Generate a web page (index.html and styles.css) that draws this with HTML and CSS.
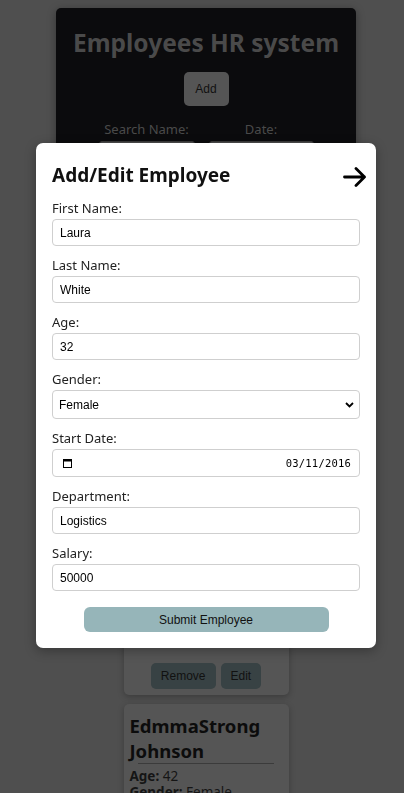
FILE: index.html
```html
<!DOCTYPE html>
<html lang="en">
<head>
<meta charset="utf-8">
<title>Employees HR system</title>
<link rel="stylesheet" href="styles.css">
</head>
<body>
<div class="page">
  <section class="header-card">
    <h1 class="app-title">Employees HR system</h1>
    <button class="btn-add" type="button">Add</button>
    <div class="search-row">
      <div class="search-col">
        <label class="search-label">Search Name:</label>
        <input class="search-input search-name" type="text">
      </div>
      <div class="search-col">
        <label class="search-label">Date:</label>
        <input class="search-input search-date" type="text">
      </div>
    </div>
  </section>

  <div class="card-list">
    <article class="emp-card">
      <h3 class="emp-name">Laura White</h3>
      <hr class="emp-rule">
      <p class="emp-line"><b>Age:</b> 32</p>
      <p class="emp-line"><b>Gender:</b> Female</p>
      <p class="emp-line"><b>Start Date:</b> 2016-03-11</p>
      <p class="emp-line"><b>Department:</b> Logistics</p>
      <p class="emp-line"><b>Salary:</b> 50000</p>
      <div class="emp-actions">
        <button class="btn-dark" type="button">Remove</button>
        <button class="btn-dark" type="button">Edit</button>
      </div>
    </article>
    <article class="emp-card">
      <h3 class="emp-name">John Smith</h3>
      <hr class="emp-rule">
      <p class="emp-line"><b>Age:</b> 35</p>
      <p class="emp-line"><b>Gender:</b> Male</p>
      <p class="emp-line"><b>Start Date:</b> 2015-06-01</p>
      <p class="emp-line"><b>Department:</b> Sales</p>
      <p class="emp-line"><b>Salary:</b> 60000</p>
      <div class="emp-actions">
        <button class="btn-dark" type="button">Remove</button>
        <button class="btn-dark" type="button">Edit</button>
      </div>
    </article>
    <article class="emp-card">
      <h3 class="emp-name">EdmmaStrong Johnson</h3>
      <hr class="emp-rule">
      <p class="emp-line"><b>Age:</b> 42</p>
      <p class="emp-line"><b>Gender:</b> Female</p>
      <p class="emp-line"><b>Start Date:</b> 2012-01-15</p>
    </article>
  </div>
</div>

<div class="modal">
  <div class="modal-head">
    <h2 class="modal-title">Add/Edit Employee</h2>
    <svg class="close-arrow" width="24" height="20" viewBox="0 0 24 20" aria-hidden="true">
      <path d="M1.5 10 H21.5 M13 1.5 L21.5 10 L13 18.5" fill="none" stroke="#000" stroke-width="2.8" stroke-linecap="round" stroke-linejoin="round"/>
    </svg>
  </div>
  <form class="emp-form">
    <div class="field">
      <label class="field-label">First Name:</label>
      <input class="field-input" type="text" value="Laura">
    </div>
    <div class="field">
      <label class="field-label">Last Name:</label>
      <input class="field-input" type="text" value="White">
    </div>
    <div class="field">
      <label class="field-label">Age:</label>
      <input class="field-input" type="text" value="32">
    </div>
    <div class="field">
      <label class="field-label">Gender:</label>
      <div class="select-wrap">
        <select class="field-select">
          <option>Female</option>
          <option>Male</option>
        </select>
        <svg class="select-chevron" width="9" height="6" viewBox="0 0 9 6" aria-hidden="true">
          <path d="M1 1 L4.5 4.5 L8 1" fill="none" stroke="#000" stroke-width="1.8"/>
        </svg>
      </div>
    </div>
    <div class="field">
      <label class="field-label">Start Date:</label>
      <div class="date-input">
        <svg class="cal-icon" width="9" height="9" viewBox="0 0 9 9" aria-hidden="true">
          <rect x="0.5" y="0.5" width="8" height="8" fill="none" stroke="#000" stroke-width="1"/>
          <rect x="0.5" y="0.5" width="8" height="2" fill="#000"/>
        </svg>
        <span class="date-value">03/11/2016</span>
      </div>
    </div>
    <div class="field">
      <label class="field-label">Department:</label>
      <input class="field-input" type="text" value="Logistics">
    </div>
    <div class="field">
      <label class="field-label">Salary:</label>
      <input class="field-input" type="text" value="50000">
    </div>
    <div class="submit-row">
      <button class="btn-submit" type="button">Submit Employee</button>
    </div>
  </form>
</div>
</body>
</html>
```

FILE: styles.css
```css
* {
  box-sizing: border-box;
}

html, body {
  margin: 0;
  padding: 0;
}

body {
  background: #4f4f4f;
  font-family: "Noto Sans", "Open Sans", sans-serif;
  color: #111;
  min-height: 793px;
  overflow: hidden;
}

.page {
  display: flex;
  flex-direction: column;
  align-items: center;
  padding-top: 8px;
  padding-left: 8px;
}

/* ---------- header card (dimmed behind modal) ---------- */
.header-card {
  width: 300px;
  height: 322px;
  background: #0b0b0d;
  border-radius: 5px;
  box-shadow: 0 2px 8px rgba(0, 0, 0, 0.35);
  display: flex;
  flex-direction: column;
  align-items: center;
  padding-top: 19px;
}

.app-title {
  margin: 0;
  font-size: 24.5px;
  line-height: 31px;
  font-weight: 700;
  color: #4a4a4a;
}

.btn-add {
  margin-top: 14px;
  width: 45px;
  height: 34px;
  border: none;
  border-radius: 5px;
  background: #555555;
  color: #111111;
  font-family: "Liberation Sans", Arial, sans-serif;
  font-size: 12px;
}

.search-row {
  margin-top: 14px;
  display: flex;
  gap: 14px;
}

.search-col {
  display: flex;
  flex-direction: column;
  align-items: center;
}

.search-label {
  font-size: 13px;
  line-height: 18px;
  color: #4a4a4a;
}

.search-input {
  margin-top: 3px;
  height: 26px;
  border: 1px solid #3a3a3a;
  border-radius: 3px;
  background: #4d4d4d;
}

.search-name {
  width: 96px;
}

.search-date {
  width: 105px;
}

/* ---------- employee cards ---------- */
.card-list {
  margin-top: 10px;
  display: flex;
  flex-direction: column;
  align-items: center;
  gap: 9px;
}

.emp-card {
  width: 165px;
  background: #555555;
  border-radius: 5px;
  box-shadow: 0 2px 6px rgba(0, 0, 0, 0.25);
  padding: 9px 6px 6px;
}

.emp-name {
  margin: 0;
  font-size: 18.5px;
  line-height: 25px;
  font-weight: 700;
  color: #0c0c0c;
}

.emp-rule {
  width: 136px;
  margin: 0 auto 4px;
  border: none;
  border-top: 1px solid #3b3b3b;
}

.emp-line {
  margin: 0;
  font-size: 13.5px;
  line-height: 16px;
  color: #151515;
}

.emp-line b {
  font-weight: 700;
}

.emp-actions {
  margin-top: 22px;
  display: flex;
  justify-content: center;
  gap: 5px;
}

.btn-dark {
  height: 26px;
  margin: 0;
  padding: 0 10px;
  border: none;
  border-radius: 5px;
  background: #384244;
  color: #111111;
  font-family: "Liberation Sans", Arial, sans-serif;
  font-size: 12px;
}

/* ---------- modal ---------- */
.modal {
  position: fixed;
  left: 36px;
  top: 143px;
  width: 340px;
  background: #ffffff;
  border-radius: 7px;
  box-shadow: 0 3px 12px rgba(0, 0, 0, 0.3);
  padding: 16px 16px 16px;
}

.modal-head {
  height: 32px;
  margin-bottom: 8px;
  display: flex;
  align-items: center;
  justify-content: space-between;
}

.modal-title {
  margin: 0;
  font-size: 19px;
  line-height: 26px;
  font-weight: 700;
  color: #111;
}

.close-arrow {
  margin-right: -7px;
  margin-top: 3px;
}

.emp-form {
  margin: 0;
}

.field {
  display: flex;
  flex-direction: column;
  margin-bottom: 10px;
}

.field-label {
  font-size: 13px;
  line-height: 19px;
  margin-bottom: 1px;
  color: #222;
}

.field-input,
.field-select,
.date-input {
  width: 308px;
  border: 1px solid #cfcfcf;
  border-radius: 4px;
  background: #fff;
  font-family: "Liberation Sans", Arial, sans-serif;
  font-size: 12px;
  color: #000;
}

.field-input {
  height: 27px;
  padding: 0 7px;
}

.select-wrap {
  position: relative;
  width: 308px;
}

.field-select {
  height: 29px;
  padding: 0 6px;
  appearance: none;
  -webkit-appearance: none;
}

.select-chevron {
  position: absolute;
  right: 6px;
  top: 12px;
  pointer-events: none;
}

.date-input {
  height: 28px;
  padding: 0 8px 0 10px;
  display: flex;
  align-items: center;
  justify-content: space-between;
}

.cal-icon {
  display: block;
}

.date-value {
  font-family: "DejaVu Sans Mono", "Liberation Mono", monospace;
  font-size: 10.5px;
  letter-spacing: 0.2px;
}

.submit-row {
  display: flex;
  justify-content: center;
  padding-top: 6px;
}

.btn-submit {
  width: 245px;
  height: 25px;
  border: none;
  border-radius: 6px;
  background: #96b5b9;
  color: #111;
  font-family: "Liberation Sans", Arial, sans-serif;
  font-size: 12px;
}
```
